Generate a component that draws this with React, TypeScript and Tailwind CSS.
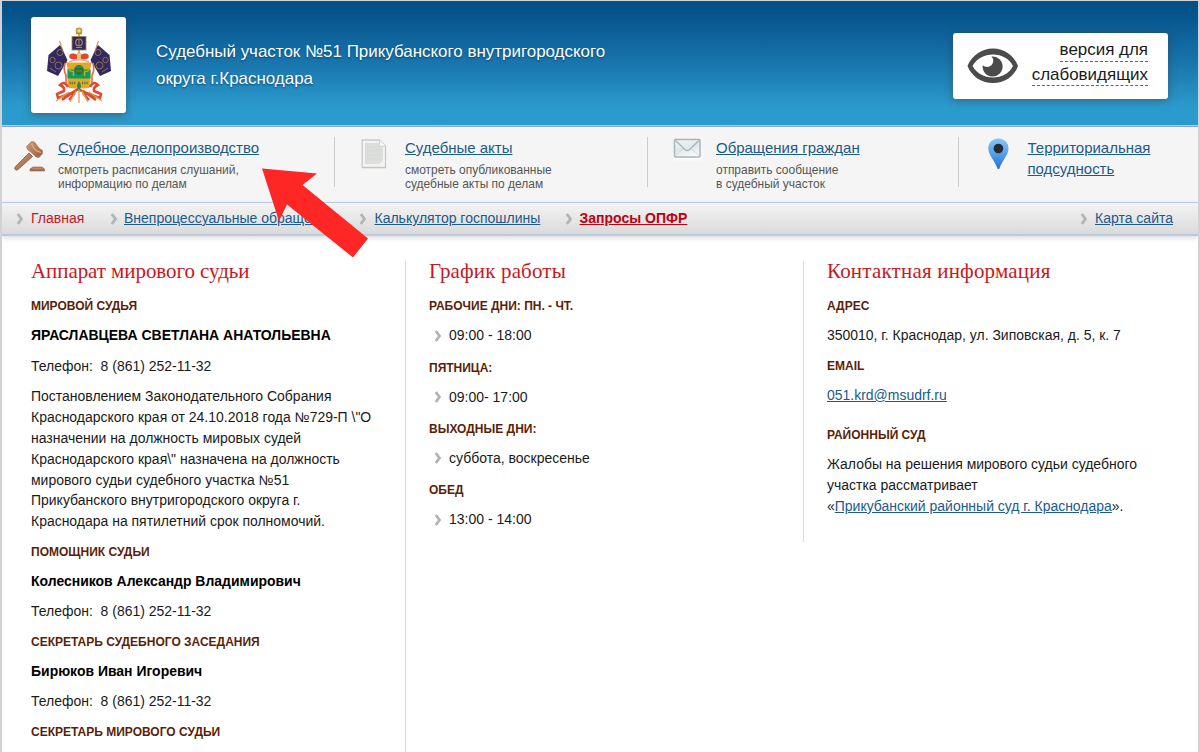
import type { ReactNode } from 'react';

function Chevron({ className = '' }: { className?: string }) {
  return (
    <svg className={`shrink-0 ${className}`} width="8" height="12" viewBox="0 0 8 12">
      <path d="M1.800 1L5.500 6L1.800 11" fill="none" stroke="#b4b4b4" strokeWidth="2.800" />
    </svg>
  );
}

function CoatOfArms() {
  return (
    <svg width="64" height="77" viewBox="0 0 64 77">
      <path d="M32 10V7" stroke="#b98a2c" strokeWidth="1.4" />
      <circle cx="32" cy="3.8" r="2.600" fill="#efd590" stroke="#c0963c" strokeWidth="1.500" />
      <path d="M29 6.500H35" stroke="#b98a2c" strokeWidth="1.400" />
      <rect x="25" y="9.500" width="14" height="13.500" fill="#33285f" stroke="#a3894f" strokeWidth="0.800" />
      <circle cx="32" cy="15.500" r="3.300" fill="none" stroke="#a88b4e" strokeWidth="1.200" />
      <path d="M29 20.500H35M32 13V18" stroke="#a88b4e" strokeWidth="1" />
      <path d="M32 23V28" stroke="#b98a2c" strokeWidth="1.400" />
      <path d="M12.500 14L22 42M51.500 14L42 42" stroke="#c4a051" strokeWidth="1.200" />
      <path d="M13 18L1.500 28L0 44L11 49L20.500 33Z" fill="#33285f" />
      <path d="M51 18L62.500 28L64 44L53 49L43.500 33Z" fill="#33285f" />
      <g fill="none" stroke="#8b7452" strokeWidth="1">
        <circle cx="13" cy="25.500" r="3" />
        <circle cx="5.500" cy="33" r="2.700" />
        <circle cx="11.500" cy="38.500" r="3.500" />
        <circle cx="51" cy="25.500" r="3" />
        <circle cx="58.500" cy="33" r="2.700" />
        <circle cx="52.500" cy="38.500" r="3.500" />
        <path d="M3 41L9 45M61 41L55 45" />
      </g>
      <path d="M22.500 31Q21 26 27 26.500Q30 27 32 29Q34 27 37 26.500Q43 26 41.500 31Q37 34 32 31Q27 34 22.500 31Z" fill="#df4733" />
      <path d="M30 26H34V32H30Z" fill="#e8c47a" />
      <path d="M22 35Q32 30.500 42 35" fill="none" stroke="#e8a99a" strokeWidth="1.500" />
      <path d="M18 36Q16 43 19 48V56M46 36Q48 43 45 48V56" fill="none" stroke="#e5674f" strokeWidth="1.600" />
      <path d="M20.500 35.500H43.500V59Q43 61.500 37 61.500H27Q21 61.500 20.500 59Z" fill="#dcab2b" />
      <path d="M20.500 42.500H43.500V51.500H20.500Z" fill="#189a55" />
      <path d="M22 43Q24 45 26.500 44.500V49M42 43Q40 45 37.500 44.500V49" fill="none" stroke="#bda92a" strokeWidth="1.500" />
      <ellipse cx="32" cy="43" rx="4.800" ry="5" fill="#25783a" />
      <path d="M29 40H35M29 44H35" stroke="#6c8a2c" strokeWidth="1" />
      <path d="M22.500 56H29M35 56H41.500" stroke="#8a6a22" strokeWidth="2.500" strokeDasharray="1.300 0.900" />
      <path d="M21 60Q17 53 13 58Q18 60 17 64L10 67L11 71L25 66L31 62L39 66L53 71L54 67L47 64Q46 60 51 58Q47 53 43 60" fill="none" stroke="#e1492f" strokeWidth="2.500" />
      <path d="M28 64L15 73M36 64L49 73M28 66L22 73M36 66L42 73" stroke="#e1492f" strokeWidth="2.500" />
      <path d="M23 75L29 64M41 75L35 64M32 62V76M9 74L22 65M55 74L42 65" stroke="#d2a45b" strokeWidth="1.300" />
      <path d="M32 54Q36 59 32 63Q28 59 32 54Z" fill="#239052" />
    </svg>
  );
}

function EyeIcon() {
  return (
    <svg width="52" height="36" viewBox="0 0 52 36">
      <path fillRule="evenodd" d="M0.500 18C5 7 15 0.500 26 0.500S47 7 51 18C47 29 37 35 26 35S5 29 0.500 18ZM5.500 18C10 25.500 17 29.500 26 29.500S42 25.500 46 18C42 10.500 35 6.500 26 6.500S10 10.500 5.500 18Z" fill="#4b4b4b" />
      <path d="M24.500 8.600A10 10 0 1 1 15.700 17.200A5.800 5.800 0 0 0 24.500 8.600Z" fill="#4b4b4b" />
    </svg>
  );
}

function GavelIcon() {
  return (
    <svg width="32" height="33" viewBox="0 0 32 33">
      <defs>
        <linearGradient id="wood" x1="0" y1="0" x2="1" y2="1">
          <stop offset="0" stopColor="#d59c74" />
          <stop offset="1" stopColor="#955c3c" />
        </linearGradient>
      </defs>
      <path d="M15 13L18.500 16.500L4 29.500Q2 31 0.800 29Q0.200 27.500 2 26Z" fill="url(#wood)" stroke="#87583e" strokeWidth="0.800" />
      <path d="M17.500 1.500L20.500 2L23 5.500L25.500 8.500L28.500 10.500L28.500 13.500L25 17.500L22 17L19 14L16 11.500L13.500 9.500L12.500 6.500Z" fill="url(#wood)" stroke="#a57759" strokeWidth="0.700" />
      <path d="M17.500 3.500L19.500 8L23 11L27 12.500" fill="none" stroke="#dfb08d" strokeWidth="1.200" />
      <path d="M16 29L19 27H28L30.500 29V31H16Z" fill="#a66f4d" stroke="#916147" strokeWidth="0.600" />
      <path d="M18.500 28.200H28.500" stroke="#cf9d78" strokeWidth="1" />
    </svg>
  );
}

function DocumentIcon() {
  return (
    <svg width="26" height="30" viewBox="0 0 26 30">
      <path d="M1.200 1H18.500L24.500 7V28.300H1.200Z" fill="#f3f4f2" stroke="#c9cbc8" strokeWidth="1.300" />
      <path d="M4 4H17L18 8H22V22L18 25H4Z" fill="#dcdedb" />
      <path d="M18.500 1L18 7.500L24.500 7" fill="#fafafa" stroke="#cbcdca" />
      <path d="M5 8H17M5 12H20M5 16H20M5 20H20" stroke="#d7d9d6" strokeWidth="1" />
      <path d="M1 28.800H25" stroke="#c0c2bf" />
    </svg>
  );
}

function MailIcon() {
  return (
    <svg width="30" height="24" viewBox="0 0 30 24">
      <defs>
        <linearGradient id="paper" x2="0.4" y2="1">
          <stop stopColor="#f2f5f6" />
          <stop offset="0.6" stopColor="#dfe7eb" />
          <stop offset="1" stopColor="#f5f8f9" />
        </linearGradient>
      </defs>
      <path d="M1 19H29V22.500H1Z" fill="#fbfbfb" />
      <rect x="1.500" y="1.500" width="25.500" height="17.500" rx="1" fill="url(#paper)" stroke="#aab4ba" strokeWidth="1.500" />
      <path d="M2.500 17.500L10 10.500M26 17.500L18.500 10.500" stroke="#ced8dd" strokeWidth="1" />
      <path d="M2.500 2.500L12 11.500Q14.200 13.500 16.500 11.500L26 2.500" fill="none" stroke="#a9b5bc" strokeWidth="1.300" />
    </svg>
  );
}

function PinIcon() {
  return (
    <svg width="21" height="32" viewBox="0 0 21 32">
      <defs>
        <linearGradient id="pin" x2="0" y2="1">
          <stop stopColor="#86c8f8" />
          <stop offset="0.500" stopColor="#559fea" />
          <stop offset="1" stopColor="#2d6fc9" />
        </linearGradient>
      </defs>
      <path d="M10.400 0.500C4.500 0.500 0.300 4.800 0.300 10.500C0.300 17 6.400 22 9.700 31H11.200C14.400 22 20.500 17 20.500 10.500C20.500 4.800 16.300 0.500 10.400 0.500Z" fill="url(#pin)" />
      <circle cx="10.400" cy="10.500" r="4.800" fill="#262b30" />
    </svg>
  );
}

function Sub({ children }: { children: ReactNode }) {
  return <h3 className="mb-[8.2px] whitespace-nowrap text-[12px] font-bold leading-[20.8px] text-[#5a1f08]">{children}</h3>;
}

function Title({ children, tracking }: { children: ReactNode; tracking: string }) {
  return (
    <h2 className={`mb-[14.2px] h-[21px] whitespace-nowrap font-['Liberation_Serif',serif] text-[21px] leading-[21px] text-[#c9171e] ${tracking}`}>{children}</h2>
  );
}

function Para({ children, bold = false }: { children: ReactNode; bold?: boolean }) {
  return <p className={`mb-[9.8px] whitespace-nowrap text-[13.98px] leading-[20.8px] ${bold ? 'font-bold text-black' : 'text-[#1a1a1a]'}`}>{children}</p>;
}

function Hours({ children }: { children: ReactNode }) {
  return (
    <div className="mb-[11.6px] flex items-center gap-[7px] pl-[5px] text-[14px] leading-[20.8px] text-[#1a1a1a]">
      <Chevron />
      <span>{children}</span>
    </div>
  );
}

function MenuLink({ title, note }: { title: ReactNode; note?: ReactNode }) {
  return (
    <div className="whitespace-nowrap">
      <a className="block text-[14.98px] leading-[21px] text-[#1c5a8c] underline">{title}</a>
      {note && <p className="mt-[6px] text-[11.97px] leading-[13.5px] text-[#555]">{note}</p>}
    </div>
  );
}

export default function App() {
  return (
    <div className="relative h-[752px] w-[1200px] overflow-hidden border-x-2 border-t border-[#cfd3d6] bg-white font-['Liberation_Sans',Arial,sans-serif]">
      <header className="flex h-[124px] justify-between bg-linear-to-b from-[#045088] from-5% via-[#1975ad] via-50% to-[#2b9acd] to-85% pl-[29px] pr-[30px]">
        <div className="flex">
          <div className="mt-[16px] flex h-[96px] w-[95px] items-center justify-center rounded-[3px] bg-white shadow-[0_2px_9px_rgba(60,60,60,0.55)]">
            <CoatOfArms />
          </div>
          <h1 className="ml-[30px] mt-[37px] whitespace-nowrap text-[16.95px] leading-[27px] text-white [text-shadow:0_1px_2px_#04446f]">
            Судебный участок №51 Прикубанского внутригородского
            <br />
            округа г.Краснодара
          </h1>
        </div>
        <a className="mt-[32px] flex h-[66px] w-[215px] items-start rounded-[3px] bg-white pl-[14px] pr-[20px] shadow-[0_1px_9px_rgba(60,60,60,0.55)]">
          <span className="mt-[15px] shrink-0"><EyeIcon /></span>
          <span className="ml-auto flex flex-col items-end whitespace-nowrap text-[16.95px] text-[#1a1a1a]">
            <span className="mt-[7px] h-[22px] border-b border-dashed border-[#666] leading-[20px]">версия для</span>
            <span className="mt-[3px] h-[21px] border-b border-dashed border-[#666] leading-[20px]">слабовидящих</span>
          </span>
        </a>
      </header>

      <section className="flex h-[77px] border-t border-[#b3c6da] bg-[#f5f5f5] pt-[11px] shadow-[inset_0_1px_0_#86a9cb]">
        <div className="flex h-[50px] w-[333px] border-r border-[#ccc] pl-[12px]">
          <span className="mt-[3px] w-[44px]"><GavelIcon /></span>
          <MenuLink title="Судебное делопроизводство" note={<>смотреть расписания слушаний,<br />информацию по делам</>} />
        </div>
        <div className="flex h-[50px] w-[313px] border-r border-[#ccc] pl-[26px]">
          <span className="mt-[2px] w-[44px]"><DocumentIcon /></span>
          <MenuLink title="Судебные акты" note={<>смотреть опубликованные<br />судебные акты по делам</>} />
        </div>
        <div className="flex h-[50px] w-[311px] border-r border-[#ccc] pl-[25px]">
          <span className="mt-[1px] w-[43px]"><MailIcon /></span>
          <MenuLink title="Обращения граждан" note={<>отправить сообщение<br />в судебный участок</>} />
        </div>
        <div className="flex h-[50px] pl-[29px]">
          <span className="mt-[1px] w-[39.5px]"><PinIcon /></span>
          <MenuLink title={<>Территориальная<br />подсудность</>} />
        </div>
      </section>

      <nav className="flex h-[34px] items-center whitespace-nowrap border-b-2 border-t border-[#b9cbdc] bg-linear-to-b from-[#f4f4f4] to-[#dadada] px-[14px] text-[14px] leading-[20px] text-[#1c5a8c] shadow-[0_2px_5px_rgba(0,0,0,0.14)]">
        <Chevron className="mr-[7px]" />
        <a className="mt-[-1px] w-[79px] text-[#c9171e]">Главная</a>
        <Chevron className="mr-[6px]" />
        <a className="mt-[-1px] w-[235px] underline">Внепроцессуальные обращения</a>
        <Chevron className="mr-[7.5px]" />
        <a className="mt-[-1px] w-[190px] underline">Калькулятор госпошлины</a>
        <Chevron className="mr-[7px]" />
        <a className="mt-[-1px] font-bold text-[#c00010] underline">Запросы ОПФР</a>
        <Chevron className="ml-auto mr-[7px]" />
        <a className="mr-[11px] mt-[-1px] underline">Карта сайта</a>
      </nav>

      <main className="flex pt-[25px]">
        <section className="h-[500px] w-[404px] border-r border-[#ddd] pl-[29px]">
          <Title tracking="tracking-[-0.07px]">Аппарат мирового судьи</Title>
          <Sub>МИРОВОЙ СУДЬЯ</Sub>
          <Para bold>ЯРАСЛАВЦЕВА СВЕТЛАНА АНАТОЛЬЕВНА</Para>
          <Para>Телефон:&nbsp; 8 (861) 252-11-32</Para>
          <Para>
            Постановлением Законодательного Собрания<br />
            Краснодарского края от 24.10.2018 года №729-П \"О<br />
            назначении на должность мировых судей<br />
            Краснодарского края\" назначена на должность<br />
            мирового судьи судебного участка №51<br />
            Прикубанского внутригородского округа г.<br />
            Краснодара на пятилетний срок полномочий.
          </Para>
          <Sub>ПОМОЩНИК СУДЬИ</Sub>
          <Para bold>Колесников Александр Владимирович</Para>
          <Para>Телефон:&nbsp; 8 (861) 252-11-32</Para>
          <Sub>СЕКРЕТАРЬ СУДЕБНОГО ЗАСЕДАНИЯ</Sub>
          <Para bold>Бирюков Иван Игоревич</Para>
          <Para>Телефон:&nbsp; 8 (861) 252-11-32</Para>
          <Sub>СЕКРЕТАРЬ МИРОВОГО СУДЬИ</Sub>
        </section>
        <section className="h-[281px] w-[398px] border-r border-[#ddd] pl-[23px]">
          <Title tracking="tracking-[0.15px]">График работы</Title>
          <Sub>РАБОЧИЕ ДНИ: ПН. - ЧТ.</Sub>
          <Hours>09:00 - 18:00</Hours>
          <Sub>ПЯТНИЦА:</Sub>
          <Hours>09:00- 17:00</Hours>
          <Sub>ВЫХОДНЫЕ ДНИ:</Sub>
          <Hours>суббота, воскресенье</Hours>
          <Sub>ОБЕД</Sub>
          <Hours>13:00 - 14:00</Hours>
        </section>
        <section className="pl-[23px]">
          <Title tracking="tracking-[0.2px]">Контактная информация</Title>
          <Sub>АДРЕС</Sub>
          <Para>350010, г. Краснодар, ул. Зиповская, д. 5, к. 7</Para>
          <Sub>EMAIL</Sub>
          <Para><a className="text-[#1c5a8c] underline">051.krd@msudrf.ru</a></Para>
          <div className="h-[9.9px]" />
          <Sub>РАЙОННЫЙ СУД</Sub>
          <Para>
            Жалобы на решения мирового судьи судебного<br />
            участка рассматривает<br />
            «<a className="text-[#1c5a8c] underline">Прикубанский районный суд г. Краснодара</a>».
          </Para>
        </section>
      </main>

      <svg className="absolute left-[258px] top-[164px]" width="112" height="96" viewBox="0 0 112 96">
        <path d="M2 3.500L57 8.500L42.500 20L108 73.500L93 92.500L27 39.500L19 56Z" fill="#ff2626" />
      </svg>
    </div>
  );
}
